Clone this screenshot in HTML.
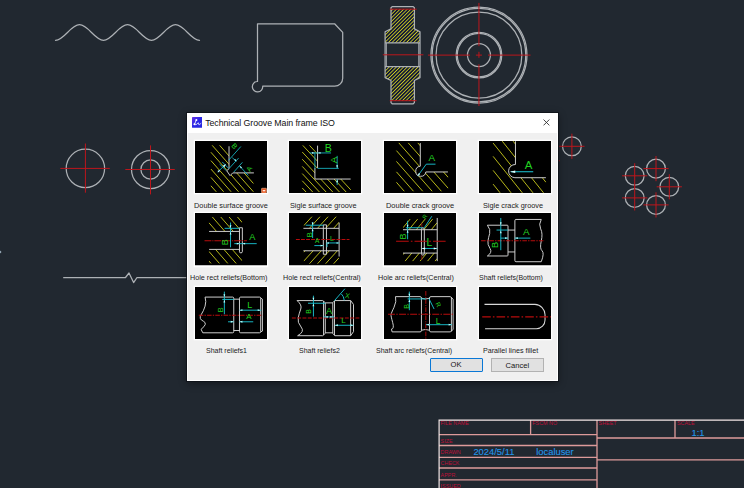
<!DOCTYPE html>
<html lang="en"><head><meta charset="utf-8"><title>Technical Groove Main frame ISO</title>
<style>
html,body{margin:0;padding:0;}
body{width:744px;height:488px;overflow:hidden;background:#212830;position:relative;font-family:"Liberation Sans",Arial,sans-serif;}
.cad{position:absolute;left:0;top:0;display:block;}
.dlg{position:absolute;left:187px;top:112.5px;width:371.3px;height:268.1px;background:#f0f0f0;box-shadow:inset 0 0 0 1px #fff,0 0 0 1px rgba(14,18,24,.8),0 2px 8px rgba(0,0,0,.45);}
.ttl{position:absolute;left:0;top:0;right:0;height:20.3px;background:#fff;}
.ttl .ico{position:absolute;left:4.7px;top:4.5px;width:10.8px;height:10.8px;display:block;}
.ttl .cap{position:absolute;left:18.2px;top:0;height:20.3px;line-height:21.6px;font-size:8.8px;color:#111;white-space:nowrap;letter-spacing:-0.075px;}
.ttl .x{position:absolute;right:8.05px;top:6.55px;width:6.9px;height:6.9px;display:block;}
.th{position:absolute;width:72.0px;height:52.2px;display:block;box-shadow:0 0 0 1.3px #fff;}
.lb{position:absolute;transform-origin:0 50%;font-size:8px;line-height:10px;height:10px;color:#1c1c1c;white-space:nowrap;}
.btn{position:absolute;top:245.8px;height:14.1px;width:53px;box-sizing:border-box;background:#e1e1e1;border:0.8px solid #b2b2b2;font-size:7.6px;line-height:13.8px;text-align:center;color:#151515;}
.btn.ok{left:242.6px;border:1.6px solid #0a78d6;border-radius:1px;line-height:12.6px;}
.btn.ca{left:303.8px;}
</style></head><body>
<svg class="cad" width="744" height="488" viewBox="0 0 744 488">
<g fill="none" stroke="#adb1b5" stroke-width="1.25" stroke-linecap="round" stroke-linejoin="round">
<path d="M55.5,40.3 C64.24,40.3 70.76,24.7 79.50,24.7 C88.24,24.7 94.76,40.3 103.50,40.3 C112.24,40.3 118.76,24.7 127.50,24.7 C136.24,24.7 142.76,40.3 151.50,40.3 C160.24,40.3 166.76,24.7 175.50,24.7 C184.24,24.7 190.76,40.3 199.50,40.3"/>
<path d="M257.5,81.5 V23.8 H334.6 L342.7,32.4 V78.2 A8,8 0 0 1 334.7,86.2 H262.7 A5.2,5.2 0 1 1 257.5,81.5 Z"/>
</g>
<defs><pattern id="hy" width="2.55" height="2.55" patternUnits="userSpaceOnUse" patternTransform="rotate(-45)"><rect width="2.55" height="2.55" fill="#0e1436"/><line x1="0" y1="1.27" x2="2.55" y2="1.27" stroke="#cccc20" stroke-width="0.9"/></pattern></defs>
<path d="M391,9.2 H414.4 V28.9 L420,31.8 V42.8 H385.1 V31.8 L391,28.9 Z" fill="url(#hy)"/><path d="M385.1,66.5 H420 V77.6 L414.4,80.5 V100.7 H391 V80.5 L385.1,77.6 Z" fill="url(#hy)"/>
<g fill="none" stroke="#adb1b5" stroke-width="1.25" stroke-linejoin="round">
<path d="M392.2,6.6 H413.2 L414.4,7.8 V28.9 L420,31.8 V77.6 L414.4,80.5 V102.6 L413.2,103.8 H392.2 L391,102.6 V80.5 L385.1,77.6 V31.8 L391,28.9 V7.8 Z"/>
<path d="M385.1,42.8 H420 M385.1,66.5 H420"/>
<path d="M386.5,42.8 V66.5 M418.6,42.8 V66.5" stroke-width="0.8"/>
</g>
<g fill="none" stroke="#bd161c" stroke-width="1">
<path d="M389.8,9.2 H416.6 M389.8,100.7 H416.6 M382.8,54.8 H423.4"/>
</g>
<g fill="none" stroke="#adb1b5" stroke-width="1.25">
<circle cx="478.95" cy="55.1" r="48.0"/>
<circle cx="478.95" cy="55.1" r="46.8"/>
<circle cx="478.95" cy="55.1" r="42.9"/>
<circle cx="478.95" cy="55.1" r="22.8"/>
<circle cx="478.95" cy="55.1" r="21.7"/>
<circle cx="478.95" cy="55.1" r="11.5"/>
</g>
<g fill="none" stroke="#bd161c" stroke-width="1">
<path d="M427.9,55.1 H470 M475.9,55.1 H481.9 M488,55.1 H530.5 M478.95,2.9 V46.2 M478.95,51.8 V57.8 M478.95,64.3 V106"/>
</g>
<g fill="none" stroke="#adb1b5" stroke-width="1.25">
<circle cx="85.4" cy="168.4" r="19.2"/><circle cx="150.5" cy="169.5" r="19.0"/><circle cx="150.5" cy="169.5" r="9.6"/>
</g>
<g fill="none" stroke="#bd161c" stroke-width="1">
<path d="M60.3,168.4 H109.8 M85.4,143.5 V192.7 M125.3,169.5 H174.8 M150.5,145.4 V194.4"/>
</g>
<path d="M63.2,277.5 H125.5 L129,273 L133.6,282.6 L137,277.5 H190" fill="none" stroke="#adb1b5" stroke-width="1.25" stroke-linejoin="round"/>
<circle cx="0" cy="252" r="1.3" fill="#8fa0ad"/>
<g fill="none" stroke="#adb1b5" stroke-width="1.25">
<circle cx="571.9" cy="146.3" r="9.4"/>
<circle cx="634.7" cy="175.8" r="9.4"/>
<circle cx="656" cy="168.6" r="9.4"/>
<circle cx="669.3" cy="186.8" r="9.4"/>
<circle cx="634.7" cy="197.9" r="9.4"/>
<circle cx="656" cy="204.9" r="9.4"/>
</g>
<g fill="none" stroke="#bd161c" stroke-width="1">
<path d="M559.3,146.3 H584.5 M571.9,133.7 V158.9 M622.1,175.8 H647.3 M634.7,163.2 V188.4 M643.4,168.6 H668.6 M656,156.0 V181.2 M656.7,186.8 H681.9 M669.3,174.2 V199.4 M622.1,197.9 H647.3 M634.7,185.3 V210.5 M643.4,204.9 H668.6 M656,192.3 V217.5 "/>
</g>
<rect x="558.4" y="160.1" width="1.2" height="1.2" fill="#bd161c"/>
<g fill="none" stroke="#dd9a9a" stroke-width="1.3">
<path d="M439,434.7 H597 M439,445.5 H597 M439,457.3 H597 M439,468 H597 M439,479.9 H597 M530.6,420 V434.7 M597,420 V488 M675,420 V438 M597,438 H744 M597,459.9 H744"/>
</g>
<path d="M439.1,488 V420.1 H744" fill="none" stroke="#f4e6e6" stroke-width="1.2"/>
<g font-family="'Liberation Sans', Arial, sans-serif" font-size="5.4" fill="#bd1038">
<text x="440.4" y="425.3">FILE NAME</text>
<text x="532.3" y="425.3">FSCM NO</text>
<text x="598.6" y="425.3">SHEET</text>
<text x="677" y="425.3">SCALE</text>
<text x="440.6" y="442.6">SIZE</text>
<text x="440.6" y="453.6">DRAWN</text>
<text x="440.6" y="465.3">CHECK</text>
<text x="440.6" y="477">APPR.</text>
<text x="440.6" y="488.3">ISSUED</text>
</g>
<g font-family="'Liberation Sans', Arial, sans-serif" font-size="9.4" fill="#2196ea" stroke="#2196ea" stroke-width="0.1">
<text x="473.4" y="455.2">2024/5/11</text><text x="536.2" y="455.4">localuser</text><text x="691.5" y="436">1:1</text>
</g>
</svg>
<div class="dlg">
<div class="ttl"><svg class="ico" viewBox="0 0 22 22"><defs><linearGradient id="ig" x1="0" y1="0" x2="1" y2="1"><stop offset="0" stop-color="#6a34e6"/><stop offset="0.45" stop-color="#2a26e6"/><stop offset="1" stop-color="#2428dc"/></linearGradient></defs><rect width="22" height="22" rx="1.2" fill="url(#ig)"/><path d="M8.9,6 L5,14.9 C8,16.5 10,15 11.5,12.8 C13,10.8 13.4,12 13.6,14.5 C13.8,17 15.5,15.5 18.2,13" fill="none" stroke="#eef0ff" stroke-width="1.9" stroke-linecap="round" stroke-linejoin="round"/><circle cx="8.9" cy="6" r="2.1" fill="#fff"/><circle cx="5" cy="14.9" r="2.1" fill="#fff"/></svg><span class="cap">Technical Groove Main frame ISO</span><svg class="x" viewBox="0 0 8 8"><path d="M0.6,0.6 L7.4,7.4 M7.4,0.6 L0.6,7.4" stroke="#2a2a2a" stroke-width="1" fill="none"/></svg></div>
<svg class="th" style="left:7.6px;top:28.0px" viewBox="15 25 620 445" preserveAspectRatio="none"><rect x="15" y="25" width="620" height="445" fill="#000"/><g fill="none" stroke-width="8.2" font-family="'Liberation Sans', Arial, sans-serif"><clipPath id="c1"><path d="M140,55 H308 V262 L285,280 L317,324 L342,297 H525 V465 H140 Z"/></clipPath><g clip-path="url(#c1)"><path d="M227,62 L518,387 M163,62 L518,458 M152,121 L454,458 M152,192 L390,458 M152,264 L326,458 M152,335 L262,458 M152,407 L198,458" stroke="#c2c21c" /></g><path d="M308,70 V262 L288,278 L317,320 L340,297 H522" stroke="#d8d8d8" /><path d="M304,190 L410,72 M310,258 L390,171 M349,290 L423,207 M336,168 L371,197 M210,290 L278,226 M249,203 L304,258 M227,223 L284,277 M400,239 L474,319" stroke="#19c3d3" stroke-width="7" /><path d="M282,222 L267,250 L254,237 Z" fill="#cff" stroke="none"/><path d="M232,270 L221,293 L209,281 Z" fill="#cff" stroke="none"/><path d="M373,199 L352,188 L362,178 Z" fill="#bff" stroke="none"/><path d="M398,237 L420,249 L410,259 Z" fill="#bff" stroke="none"/><text x="338" y="82" font-size="62" fill="#22d222" text-anchor="middle" transform="rotate(48 338 82)">B</text><text x="501" y="274" font-size="62" fill="#22d222" text-anchor="middle" transform="rotate(-62 501 274)">A</text><rect x="588" y="428" width="42" height="40" rx="4" fill="#e8541c" stroke="#f6c0a0" stroke-width="5"/><rect x="598" y="444" width="22" height="10" fill="#fff" stroke="none"/></g></svg>
<svg class="th" style="left:102.3px;top:28.0px" viewBox="20 22 625 450" preserveAspectRatio="none"><rect x="20" y="22" width="625" height="450" fill="#000"/><g fill="none" stroke-width="8.2" font-family="'Liberation Sans', Arial, sans-serif"><clipPath id="c2"><path d="M120,50 H268 V255 H245 V350 H560 V470 H120 Z"/></clipPath><g clip-path="url(#c2)"><path d="M198,60 L556,443 M140,60 L516,462 M135,117 L458,462 M135,179 L400,462 M135,241 L342,462 M135,303 L284,462 M135,365 L226,462 M135,427 L168,462" stroke="#c2c21c" /></g><path d="M268,62 V256 M245,256 V350 H555" stroke="#d8d8d8" /><path d="M200,125 H385 M245,120 V262 M268,258 H452 M438,150 V258 M438,352 V402" stroke="#19c3d3" stroke-width="7" /><path d="M245,125 L219,133 L219,117 Z" fill="#bff" stroke="none"/><path d="M268,125 L294,117 L294,133 Z" fill="#bff" stroke="none"/><path d="M438,258 L430,232 L446,232 Z" fill="#bff" stroke="none"/><path d="M438,352 L446,378 L430,378 Z" fill="#bff" stroke="none"/><text x="360" y="116" font-size="92" fill="#22d222" text-anchor="middle">B</text><text x="434" y="185" font-size="84" fill="#22d222" text-anchor="middle" transform="rotate(-90 434 185)">A</text></g></svg>
<svg class="th" style="left:196.9px;top:28.0px" viewBox="25 20 625 455" preserveAspectRatio="none"><rect x="25" y="20" width="625" height="455" fill="#000"/><g fill="none" stroke-width="8.2" font-family="'Liberation Sans', Arial, sans-serif"><clipPath id="c3"><path d="M120,30 H340 V240 A44,44 0 1 0 388,290 H585 V470 H120 Z"/></clipPath><g clip-path="url(#c3)"><path d="M318,36 L584,339 M235,36 L584,434 M153,36 L523,458 M133,104 L443,458 M133,198 L361,458 M133,289 L281,458 M133,380 L201,458" stroke="#c2c21c" /></g><path d="M340,38 V240 A44,44 0 1 0 388,290 H580" stroke="#d8d8d8" /><path d="M472,222 H392 L318,325" stroke="#19c3d3" stroke-width="8" /><path d="M316,328 L327,299 L340,308 Z" fill="#dff" stroke="none"/><text x="440" y="198" font-size="86" fill="#22d222" text-anchor="middle">A</text></g></svg>
<svg class="th" style="left:291.5px;top:28.0px" viewBox="22 20 628 455" preserveAspectRatio="none"><rect x="22" y="20" width="628" height="455" fill="#000"/><g fill="none" stroke-width="8.2" font-family="'Liberation Sans', Arial, sans-serif"><clipPath id="c4"><path d="M120,10 H340 V225 A57,57 0 0 0 335,340 H610 V480 H120 Z"/></clipPath><g clip-path="url(#c4)"><path d="M320,22 L606,380 M225,22 L585,472 M145,38 L493,472 M145,154 L400,472 M145,276 L302,472 M145,396 L206,472" stroke="#c2c21c" /></g><path d="M340,22 V225 A57,57 0 0 0 335,340 H605" stroke="#d8d8d8" /><path d="M495,288 H300" stroke="#19c3d3" stroke-width="9" /><path d="M292,288 L338,277 L338,299 Z" fill="#dff" stroke="none"/><text x="455" y="268" font-size="100" fill="#22d222" text-anchor="middle">A</text></g></svg>
<svg class="th" style="left:7.6px;top:100.9px" viewBox="12 22 628 453" preserveAspectRatio="none"><rect x="12" y="22" width="628" height="453" fill="#000"/><g fill="none" stroke-width="8.2" font-family="'Liberation Sans', Arial, sans-serif"><clipPath id="c5"><path d="M130,55 H425 V150 H400 V182 H130 Z M130,338 H400 V365 H425 V462 H130 Z"/></clipPath><g clip-path="url(#c5)"><path d="M381,55 L425,106 M308,55 L425,189 M235,55 L425,272 M162,55 L425,355 M133,106 L425,438 M133,189 L373,462 M133,272 L300,462 M133,355 L227,462 M133,438 L154,462" stroke="#c2c21c" /></g><path d="M135,182 H400 M135,338 H400 M400,150 H425 V358 Q425,368 412,368 Q400,368 400,358 Z" stroke="#d8d8d8" /><path d="M95,262 H465" stroke="#b80c0c" stroke-width="9" stroke-dasharray="60 8 10 8"/><path d="M322,105 V320 M270,155 H400 M355,288 H550" stroke="#19c3d3" stroke-width="8" /><path d="M322,152 L314,128 L330,128 Z" fill="#bff" stroke="none"/><path d="M322,184 L330,208 L314,208 Z" fill="#bff" stroke="none"/><path d="M400,288 L376,296 L376,280 Z" fill="#bff" stroke="none"/><path d="M425,288 L449,280 L449,296 Z" fill="#bff" stroke="none"/><text x="296" y="275" font-size="78" fill="#22d222" text-anchor="middle" transform="rotate(-90 296 275)">B</text><text x="512" y="258" font-size="80" fill="#22d222" text-anchor="middle">A</text></g></svg>
<svg class="th" style="left:102.3px;top:100.9px" viewBox="20 22 625 453" preserveAspectRatio="none"><rect x="20" y="22" width="625" height="453" fill="#000"/><g fill="none" stroke-width="8.2" font-family="'Liberation Sans', Arial, sans-serif"><clipPath id="c6"><path d="M145,50 H455 V155 H145 Z M145,350 H455 V465 H145 Z"/></clipPath><g clip-path="url(#c6)"><path d="M148,132 L221,52 M148,209 L291,52 M148,286 L361,52 M148,363 L431,52 M148,440 L456,101 M198,462 L456,178 M268,462 L456,255 M338,462 L456,332 M408,462 L456,409" stroke="#c2c21c" /></g><path d="M145,155 H455 M145,350 H455 M455,105 V400 M318,125 H345 V380 H318 Z" stroke="#d8d8d8" /><path d="M80,252 H545" stroke="#b80c0c" stroke-width="9" stroke-dasharray="34 10"/><path d="M165,128 H318 M225,100 V240 M240,305 H320 M345,282 H455 M350,282 V318" stroke="#19c3d3" stroke-width="8" /><path d="M225,128 L217,104 L233,104 Z" fill="#bff" stroke="none"/><path d="M225,156 L233,180 L217,180 Z" fill="#bff" stroke="none"/><path d="M318,305 L294,313 L294,297 Z" fill="#bff" stroke="none"/><path d="M345,282 L367,275 L367,289 Z" fill="#bff" stroke="none"/><path d="M455,282 L433,289 L433,275 Z" fill="#bff" stroke="none"/><text x="222" y="212" font-size="70" fill="#22d222" text-anchor="middle" transform="rotate(-90 222 212)">B</text><text x="265" y="285" font-size="56" fill="#22d222" text-anchor="middle">A</text><text x="393" y="262" font-size="60" fill="#22d222" text-anchor="middle">L</text></g></svg>
<svg class="th" style="left:196.9px;top:100.9px" viewBox="25 22 625 453" preserveAspectRatio="none"><rect x="25" y="22" width="625" height="453" fill="#000"/><g fill="none" stroke-width="8.2" font-family="'Liberation Sans', Arial, sans-serif"><clipPath id="c7"><path d="M190,60 H487 V167 H190 Z M190,370 H487 V445 H190 Z"/></clipPath><g clip-path="url(#c7)"><path d="M190,150 L252,75 M190,228 L317,75 M190,306 L382,75 M190,384 L447,75 M208,440 L487,105 M273,440 L487,183 M338,440 L487,261 M403,440 L487,339 M468,440 L487,417" stroke="#c2c21c" /></g><path d="M353,110 V150 M353,388 V430" stroke="#8a1414" stroke-width="8" /><path d="M190,167 H487 M190,370 H487 M487,65 V440 M350,165 Q350,150 362,150 Q375,150 375,165 V372 Q375,388 362,388 Q350,388 350,372 Z" stroke="#d8d8d8" /><path d="M130,267 H570" stroke="#b80c0c" stroke-width="9" stroke-dasharray="110 18 14 18"/><path d="M230,90 V250 M215,150 H360 M375,150 L440,50 M355,330 H487" stroke="#19c3d3" stroke-width="8" /><path d="M230,150 L222,124 L238,124 Z" fill="#bff" stroke="none"/><path d="M230,168 L238,194 L222,194 Z" fill="#bff" stroke="none"/><path d="M352,330 L382,321 L382,339 Z" fill="#eff" stroke="none"/><path d="M487,330 L457,339 L457,321 Z" fill="#eff" stroke="none"/><text x="214" y="225" font-size="78" fill="#22d222" text-anchor="middle" transform="rotate(-90 214 225)">B</text><text x="395" y="62" font-size="50" fill="#22d222" text-anchor="middle" transform="rotate(-60 395 62)">R</text><text x="420" y="310" font-size="90" fill="#22d222" text-anchor="middle">L</text></g></svg>
<svg class="th" style="left:291.5px;top:100.9px" viewBox="22 22 628 453" preserveAspectRatio="none"><rect x="22" y="22" width="628" height="453" fill="#000"/><g fill="none" stroke-width="8.2" font-family="'Liberation Sans', Arial, sans-serif"><path d="M95,128 H268 Q275,128 275,135 V388 Q275,395 268,395 H95 M95,128 Q125,165 115,200 T100,265 T118,330 T95,395" stroke="#d8d8d8" /><path d="M275,170 H335 M275,360 H335" stroke="#d8d8d8" /><path d="M345,78 H565 M335,88 Q335,78 345,78 M335,88 V435 Q335,445 345,445 H565 M565,78 Q540,120 560,160 T565,265 T572,350 T565,445" stroke="#d8d8d8" /><path d="M40,262 H595" stroke="#b80c0c" stroke-width="9" stroke-dasharray="40 10 12 10"/><path d="M212,65 V345 M175,170 H275 M212,240 H275 M335,240 H470" stroke="#19c3d3" stroke-width="8" /><path d="M212,128 L204,102 L220,102 Z" fill="#bff" stroke="none"/><path d="M212,172 L220,198 L204,198 Z" fill="#bff" stroke="none"/><path d="M275,240 L249,248 L249,232 Z" fill="#bff" stroke="none"/><path d="M335,240 L361,232 L361,248 Z" fill="#bff" stroke="none"/><text x="192" y="300" font-size="80" fill="#22d222" text-anchor="middle" transform="rotate(-90 192 300)">B</text><text x="435" y="215" font-size="86" fill="#22d222" text-anchor="middle">A</text></g></svg>
<svg class="th" style="left:7.6px;top:174.2px" viewBox="12 25 628 450" preserveAspectRatio="none"><rect x="12" y="25" width="628" height="450" fill="#000"/><g fill="none" stroke-width="8.2" font-family="'Liberation Sans', Arial, sans-serif"><path d="M100,112 H340 Q350,112 350,122 V410 Q350,420 340,420 H80 M100,112 Q112,150 100,190 T65,265 T85,320 T65,390 L80,420" stroke="#d8d8d8" /><path d="M350,130 H400 M350,400 H400" stroke="#d8d8d8" /><path d="M410,112 H575 Q585,112 585,122 V410 Q585,420 575,420 H410 Q400,420 400,410 V122 Q400,112 410,112 M585,120 L600,130 V405 L585,412" stroke="#d8d8d8" /><path d="M45,268 H600" stroke="#b80c0c" stroke-width="9" stroke-dasharray="40 10 12 10"/><path d="M268,65 V260 M250,132 H350 M400,225 H590 M300,325 H350 M400,325 H520" stroke="#19c3d3" stroke-width="8" /><path d="M268,112 L260,88 L276,88 Z" fill="#bff" stroke="none"/><path d="M268,134 L276,158 L260,158 Z" fill="#bff" stroke="none"/><path d="M400,225 L426,217 L426,233 Z" fill="#bff" stroke="none"/><path d="M585,225 L559,233 L559,217 Z" fill="#bff" stroke="none"/><path d="M350,325 L324,333 L324,317 Z" fill="#bff" stroke="none"/><path d="M400,325 L426,317 L426,333 Z" fill="#bff" stroke="none"/><text x="255" y="222" font-size="62" fill="#22d222" text-anchor="middle" transform="rotate(-90 255 222)">B</text><text x="490" y="208" font-size="78" fill="#22d222" text-anchor="middle">L</text><text x="482" y="300" font-size="70" fill="#22d222" text-anchor="middle">A</text></g></svg>
<svg class="th" style="left:102.3px;top:174.2px" viewBox="20 25 625 450" preserveAspectRatio="none"><rect x="20" y="25" width="625" height="450" fill="#000"/><g fill="none" stroke-width="8.2" font-family="'Liberation Sans', Arial, sans-serif"><path d="M90,142 H312 L335,160 V425 L312,445 H95 M320,148 V440 M90,142 Q135,180 122,215 T100,290 T125,370 T95,445" stroke="#d8d8d8" /><path d="M335,162 H400 M335,420 H400" stroke="#d8d8d8" /><path d="M400,160 L418,142 H555 L580,175 V410 L555,445 H418 L400,425 Z M415,145 V442 M555,142 V445" stroke="#d8d8d8" /><path d="M45,292 H635" stroke="#b80c0c" stroke-width="9" stroke-dasharray="34 12"/><path d="M232,100 V280 M185,165 H335 M320,283 H410 M415,142 L505,40 M475,85 Q495,105 500,140 M420,355 H578" stroke="#19c3d3" stroke-width="8" /><path d="M232,142 L224,118 L240,118 Z" fill="#bff" stroke="none"/><path d="M232,167 L240,191 L224,191 Z" fill="#bff" stroke="none"/><path d="M335,283 L357,276 L357,290 Z" fill="#bff" stroke="none"/><path d="M400,283 L378,290 L378,276 Z" fill="#bff" stroke="none"/><path d="M420,355 L444,347 L444,363 Z" fill="#bff" stroke="none"/><path d="M578,355 L554,363 L554,347 Z" fill="#bff" stroke="none"/><text x="212" y="236" font-size="60" fill="#22d222" text-anchor="middle" transform="rotate(-90 212 236)">B</text><text x="368" y="260" font-size="80" fill="#22d222" text-anchor="middle">A</text><text x="523" y="120" font-size="60" fill="#22d222" text-anchor="middle" transform="rotate(12 523 120)">X</text><text x="493" y="335" font-size="70" fill="#22d222" text-anchor="middle">L</text></g></svg>
<svg class="th" style="left:196.9px;top:174.2px" viewBox="25 25 625 450" preserveAspectRatio="none"><rect x="25" y="25" width="625" height="450" fill="#000"/><g fill="none" stroke-width="8.2" font-family="'Liberation Sans', Arial, sans-serif"><path d="M125,108 H338 Q350,108 350,120 V400 Q350,412 338,412 H95 M125,108 Q136,150 112,200 T86,262 T100,330 T90,388 L95,412" stroke="#d8d8d8" /><path d="M350,122 Q385,135 420,122 M350,398 Q385,385 420,398" stroke="#d8d8d8" /><path d="M432,108 H600 L625,130 V392 L600,412 H432 Q420,412 420,400 V120 Q420,108 432,108 M610,112 V408" stroke="#d8d8d8" /><path d="M60,260 H635" stroke="#b80c0c" stroke-width="9" stroke-dasharray="60 12 12 12"/><path d="M388,60 V470" stroke="#b80c0c" stroke-width="8" stroke-dasharray="40 10 10 10"/><path d="M245,65 V225 M230,128 H390 M415,125 L460,215 M390,350 H615" stroke="#19c3d3" stroke-width="8" /><path d="M245,108 L237,84 L253,84 Z" fill="#bff" stroke="none"/><path d="M245,130 L253,154 L237,154 Z" fill="#bff" stroke="none"/><path d="M390,350 L416,342 L416,358 Z" fill="#bff" stroke="none"/><path d="M612,350 L586,358 L586,342 Z" fill="#bff" stroke="none"/><text x="238" y="192" font-size="62" fill="#22d222" text-anchor="middle" transform="rotate(-90 238 192)">B</text><text x="478" y="186" font-size="56" fill="#22d222" text-anchor="middle" transform="rotate(65 478 186)">R</text><text x="495" y="342" font-size="72" fill="#22d222" text-anchor="middle">L</text></g></svg>
<svg class="th" style="left:291.5px;top:174.2px" viewBox="22 25 628 450" preserveAspectRatio="none"><rect x="22" y="25" width="628" height="450" fill="#000"/><g fill="none" stroke-width="8.2" font-family="'Liberation Sans', Arial, sans-serif"><path d="M70,175 H510 A90,90 0 0 1 598,265 V310 A75,75 0 0 1 523,385 H75" stroke="#d8d8d8" stroke-width="9" /><path d="M50,283 H650" stroke="#b80c0c" stroke-width="10" stroke-dasharray="75 18 14 18"/></g></svg>
<div class="lb" id="l0" style="left:7.4px;top:88.3px;transform:scaleX(0.9177)">Double surface groove</div>
<div class="lb" id="l1" style="left:103.2px;top:88.3px;transform:scaleX(0.9116)">Sigle surface groove</div>
<div class="lb" id="l2" style="left:199.0px;top:88.3px;transform:scaleX(0.9296)">Double crack groove</div>
<div class="lb" id="l3" style="left:296.1px;top:88.3px;transform:scaleX(0.9120)">Sigle crack groove</div>
<div class="lb" id="l4" style="left:3.3px;top:160.1px;transform:scaleX(0.8978)">Hole rect reliefs(Bottom)</div>
<div class="lb" id="l5" style="left:95.5px;top:160.1px;transform:scaleX(0.8969)">Hole rect reliefs(Central)</div>
<div class="lb" id="l6" style="left:191.4px;top:160.1px;transform:scaleX(0.8979)">Hole arc reliefs(Central)</div>
<div class="lb" id="l7" style="left:291.7px;top:160.1px;transform:scaleX(0.8772)">Shaft reliefs(Bottom)</div>
<div class="lb" id="l8" style="left:18.9px;top:233.1px;transform:scaleX(0.8771)">Shaft reliefs1</div>
<div class="lb" id="l9" style="left:111.9px;top:233.1px;transform:scaleX(0.8749)">Shaft reliefs2</div>
<div class="lb" id="l10" style="left:188.9px;top:233.1px;transform:scaleX(0.8784)">Shaft arc reliefs(Central)</div>
<div class="lb" id="l11" style="left:296.3px;top:233.1px;transform:scaleX(0.8917)">Parallel lines fillet</div>
<div class="btn ok">OK</div><div class="btn ca">Cancel</div>
</div></body></html>
